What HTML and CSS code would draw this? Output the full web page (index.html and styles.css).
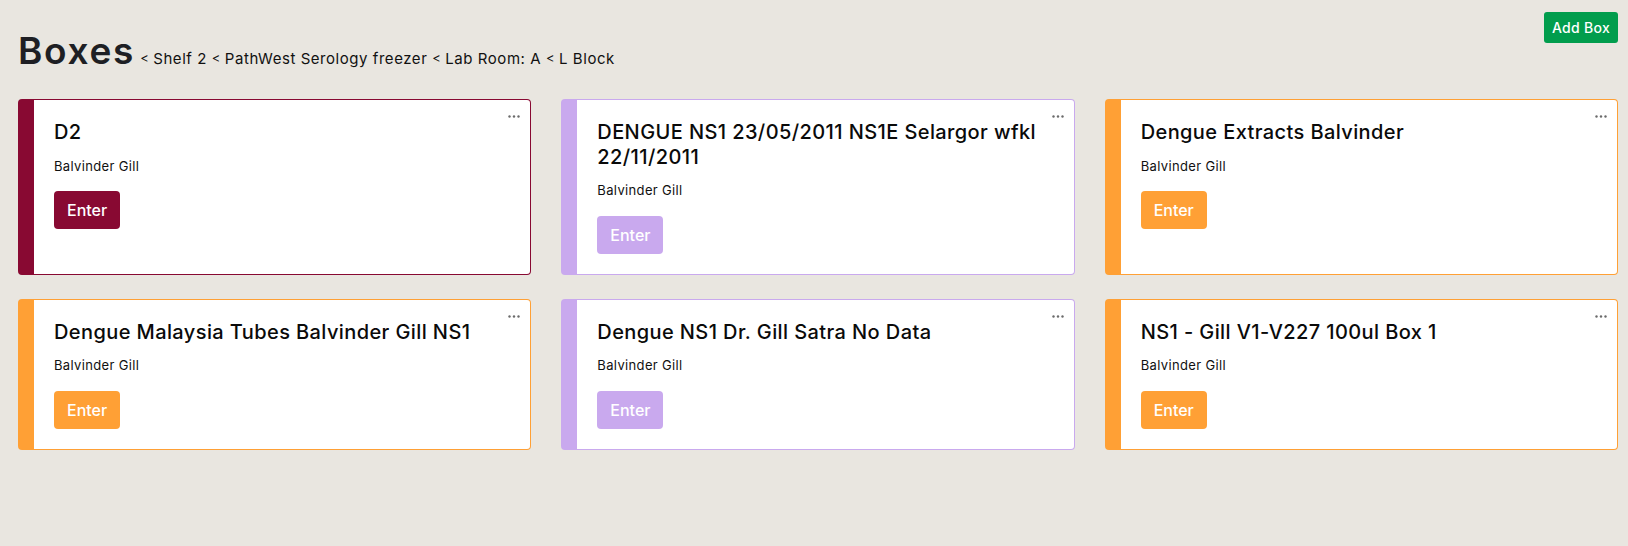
FILE: index.html
```html
<!DOCTYPE html>
<html lang="en">
<head>
<meta charset="utf-8">
<title>Boxes</title>
<link rel="stylesheet" href="styles.css">
</head>
<body>
<div class="page">
  <header class="header">
    <div class="title-row">
      <h1 class="title">Boxes</h1>
      <nav class="crumbs">
        <span class="sep">&lt;</span><span>Shelf 2</span>
        <span class="sep">&lt;</span><span>PathWest Serology freezer</span>
        <span class="sep">&lt;</span><span>Lab Room: A</span>
        <span class="sep">&lt;</span><span>L Block</span>
      </nav>
    </div>
    <button class="add-btn">Add Box</button>
  </header>

  <main class="grid">
    <div class="card maroon">
      <svg class="dots" width="12" height="3" viewBox="0 0 12 3"><circle cx="1.5" cy="1.5" r="1.2"/><circle cx="6" cy="1.5" r="1.2"/><circle cx="10.5" cy="1.5" r="1.2"/></svg>
      <h2 class="card-title">D2</h2>
      <p class="card-owner">Balvinder Gill</p>
      <button class="enter">Enter</button>
    </div>
    <div class="card purple">
      <svg class="dots" width="12" height="3" viewBox="0 0 12 3"><circle cx="1.5" cy="1.5" r="1.2"/><circle cx="6" cy="1.5" r="1.2"/><circle cx="10.5" cy="1.5" r="1.2"/></svg>
      <h2 class="card-title">DENGUE NS1 23/05/2011 NS1E Selargor wfkl 22/11/2011</h2>
      <p class="card-owner">Balvinder Gill</p>
      <button class="enter">Enter</button>
    </div>
    <div class="card orange">
      <svg class="dots" width="12" height="3" viewBox="0 0 12 3"><circle cx="1.5" cy="1.5" r="1.2"/><circle cx="6" cy="1.5" r="1.2"/><circle cx="10.5" cy="1.5" r="1.2"/></svg>
      <h2 class="card-title">Dengue Extracts Balvinder</h2>
      <p class="card-owner">Balvinder Gill</p>
      <button class="enter">Enter</button>
    </div>
    <div class="card orange">
      <svg class="dots" width="12" height="3" viewBox="0 0 12 3"><circle cx="1.5" cy="1.5" r="1.2"/><circle cx="6" cy="1.5" r="1.2"/><circle cx="10.5" cy="1.5" r="1.2"/></svg>
      <h2 class="card-title">Dengue Malaysia Tubes Balvinder Gill NS1</h2>
      <p class="card-owner">Balvinder Gill</p>
      <button class="enter">Enter</button>
    </div>
    <div class="card purple">
      <svg class="dots" width="12" height="3" viewBox="0 0 12 3"><circle cx="1.5" cy="1.5" r="1.2"/><circle cx="6" cy="1.5" r="1.2"/><circle cx="10.5" cy="1.5" r="1.2"/></svg>
      <h2 class="card-title">Dengue NS1 Dr. Gill Satra No Data</h2>
      <p class="card-owner">Balvinder Gill</p>
      <button class="enter">Enter</button>
    </div>
    <div class="card orange">
      <svg class="dots" width="12" height="3" viewBox="0 0 12 3"><circle cx="1.5" cy="1.5" r="1.2"/><circle cx="6" cy="1.5" r="1.2"/><circle cx="10.5" cy="1.5" r="1.2"/></svg>
      <h2 class="card-title">NS1 - Gill V1-V227 100ul Box 1</h2>
      <p class="card-owner">Balvinder Gill</p>
      <button class="enter">Enter</button>
    </div>
  </main>
</div>
</body>
</html>
```
FILE: styles.css
```css
* { box-sizing: border-box; }
html, body { margin: 0; padding: 0; }
body {
  background: #e9e6e0;
  font-family: Inter, "Noto Sans", "DejaVu Sans", sans-serif;
  color: #111;
  width: 1628px;
  height: 546px;
  overflow: hidden;
}
.page { padding: 12px 10px 0 18px; }

.header {
  display: flex;
  justify-content: space-between;
  align-items: flex-start;
}
.title-row {
  display: flex;
  align-items: baseline;
  gap: 5px;
  margin-top: 17px;
}
.title {
  margin: 0;
  font-size: 37px;
  line-height: 43px;
  font-weight: 600;
  letter-spacing: 1.7px;
  color: #1e1f24;
}
.crumbs {
  font-size: 15px;
  font-weight: 400;
  color: #111;
  letter-spacing: 0.55px;
}
.crumbs .sep { font-size: 13px; margin-right: 4px; position: relative; top: -1px; }

.add-btn {
  border: 0;
  background: #019d4d;
  color: #fff;
  font-family: inherit;
  font-size: 14px;
  font-weight: 500;
  line-height: 19px;
  letter-spacing: 0.3px;
  padding: 6px 8px;
  border-radius: 3px;
  height: 31px;
}

.grid {
  display: grid;
  grid-template-columns: repeat(3, 1fr);
  column-gap: 30px;
  row-gap: 24px;
  margin-top: 27px;
}
.card {
  position: relative;
  background: #fff;
  border: 1px solid var(--c);
  border-left: 16px solid var(--c);
  border-radius: 4px;
  padding: 20px 20px 20px 20px;
}
.maroon { --c: #880932; }
.purple { --c: #c9a9ee; }
.orange { --c: #ffa035; }

.dots {
  position: absolute;
  top: 15px;
  right: 10px;
  fill: #6b6b6b;
}
.card-title {
  margin: 0;
  font-size: 20px;
  line-height: 24.5px;
  font-weight: 500;
  letter-spacing: 0.4px;
  color: #0a0a0a;
}
.card-owner {
  margin: 12px 0 0;
  font-size: 13px;
  line-height: 19px;
  color: #111;
  letter-spacing: 0.35px;
}
.enter {
  display: block;
  margin-top: 15.5px;
  border: 0;
  border-radius: 4px;
  background: var(--c);
  color: #fff;
  font-family: inherit;
  font-size: 16px;
  font-weight: 500;
  line-height: 22px;
  padding: 8px 13px;
  height: 38px;
}
```
